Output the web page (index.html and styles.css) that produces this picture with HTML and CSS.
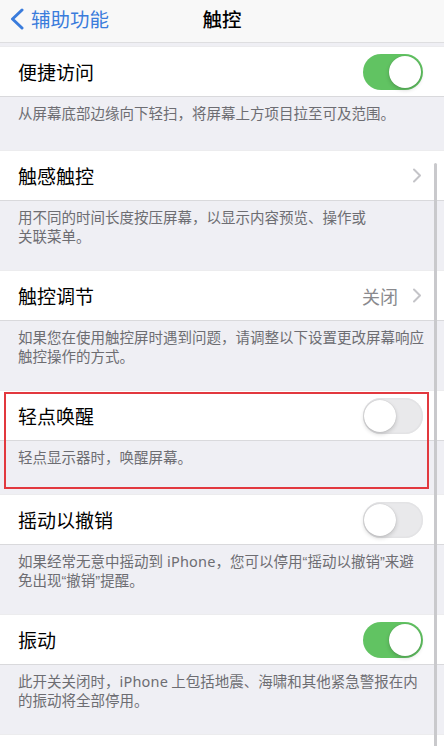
FILE: index.html
```html
<!DOCTYPE html>
<html lang="zh-CN">
<head>
<meta charset="utf-8">
<title>触控</title>
<link rel="stylesheet" href="styles.css">
</head>
<body>
<div class="screen">
  <header class="nav">
    <div class="back">
      <svg class="back-icon" width="16" height="22" viewBox="0 0 16 22"><path d="M13 2 L3.5 11 L13 20" fill="none" stroke="#3a7cdc" stroke-width="3" stroke-linecap="round" stroke-linejoin="round"/></svg>
      <span class="back-text">辅助功能</span>
    </div>
    <div class="nav-title">触控</div>
  </header>
  <div class="gap"></div>

  <div class="row">
    <span class="label">便捷访问</span>
    <span class="toggle on"><span class="knob"></span></span>
  </div>
  <div class="footer one">从屏幕底部边缘向下轻扫，将屏幕上方项目拉至可及范围。</div>

  <div class="row">
    <span class="label">触感触控</span>
    <span class="accessory"><svg class="chev" width="10" height="15" viewBox="0 0 10 15"><path d="M2 1.5 L8 7.5 L2 13.5" fill="none" stroke="#c4c4c8" stroke-width="2" stroke-linecap="round" stroke-linejoin="round"/></svg></span>
  </div>
  <div class="footer two">用不同的时间长度按压屏幕，以显示内容预览、操作或<br>关联菜单。</div>

  <div class="row">
    <span class="label">触控调节</span>
    <span class="accessory"><span class="value">关闭</span><svg class="chev" width="10" height="15" viewBox="0 0 10 15"><path d="M2 1.5 L8 7.5 L2 13.5" fill="none" stroke="#c4c4c8" stroke-width="2" stroke-linecap="round" stroke-linejoin="round"/></svg></span>
  </div>
  <div class="footer two">如果您在使用触控屏时遇到问题，请调整以下设置更改屏幕响应<br>触控操作的方式。</div>

  <div class="highlight-group">
    <div class="row">
      <span class="label">轻点唤醒</span>
      <span class="toggle off"><span class="knob"></span></span>
    </div>
    <div class="footer one">轻点显示器时，唤醒屏幕。</div>
    <div class="highlight"></div>
  </div>

  <div class="row">
    <span class="label">摇动以撤销</span>
    <span class="toggle off"><span class="knob"></span></span>
  </div>
  <div class="footer two">如果经常无意中摇动到<span class="latin"> iPhone</span>，您可以停用<span class="q">“</span>摇动以撤销<span class="q">”</span>来避<br>免出现<span class="q">“</span>撤销<span class="q">”</span>提醒。</div>

  <div class="row">
    <span class="label">振动</span>
    <span class="toggle on"><span class="knob"></span></span>
  </div>
  <div class="footer two">此开关关闭时，<span class="latin">iPhone</span> 上包括地震、海啸和其他紧急警报在内<br>的振动将全部停用。</div>

  <div class="row"></div>

  <div class="scrollbar"></div>
</div>
</body>
</html>
```
FILE: styles.css
```css
* { box-sizing: border-box; }
html, body {
  margin: 0;
  padding: 0;
  background: #efeff4;
}
.screen {
  position: relative;
  width: 444px;
  height: 746px;
  overflow: hidden;
  background: #efeff4;
  font-family: "Noto Sans CJK SC", "Noto Sans", "Liberation Sans", sans-serif;
}
.nav {
  position: relative;
  height: 43px;
  background: #f8f8f8;
  border-bottom: 1px solid #dedee0;
  display: flex;
  align-items: flex-start;
}
.back {
  display: flex;
  align-items: center;
  padding: 8px 0 0 9px;
  gap: 6px;
}
.back-icon { display: block; }
.back-text {
  color: #3a7cdc;
  font-size: 19.5px;
  line-height: 22px;
}
.nav-title {
  position: absolute;
  left: 0;
  right: 0;
  top: 7px;
  text-align: center;
  font-size: 19.5px;
  line-height: 24px;
  font-weight: 500;
  color: #000;
}
.gap { height: 3px; }
.row {
  height: 51px;
  flex: none;
  background: #fff;
  border-top: 1px solid #ececee;
  border-bottom: 1px solid #d9d9dc;
  display: flex;
  align-items: center;
  justify-content: space-between;
  padding: 0 21px 0 18px;
}
.label {
  font-size: 19px;
  color: #000;
  line-height: 24px;
}
.accessory {
  display: flex;
  align-items: center;
  gap: 14px;
  margin-right: 1px;
}
.value {
  font-size: 18px;
  color: #8a8a8e;
}
.chev { display: block; }
.footer {
  padding: 6px 18px 0 18px;
  font-size: 14.5px;
  line-height: 19px;
  color: #6d6d72;
  white-space: nowrap;
  overflow: hidden;
}
.footer.one { height: 53px; }
.footer.two { height: 69px; }
.latin {
  font-family: "Noto Sans", "Liberation Sans", sans-serif;
  letter-spacing: 0.2px;
  line-height: 1;
}
.q {
  font-family: "Liberation Sans", "Noto Sans", sans-serif;
  line-height: 1;
}
.toggle {
  position: relative;
  width: 60px;
  height: 36px;
  border-radius: 18px;
  flex: none;
}
.toggle.on { background: #61c362; }
.toggle.off {
  background: #e9e9eb;
  box-shadow: inset 0 0 0 1.5px #e3e3e5;
}
.knob {
  position: absolute;
  top: 2px;
  width: 32px;
  height: 32px;
  border-radius: 50%;
  background: #fff;
  box-shadow: 0 2px 4px rgba(0,0,0,0.18), 0 0 1px rgba(0,0,0,0.2);
}
.toggle.on .knob { right: 2px; }
.toggle.off .knob { left: 1px; }
.highlight-group { position: relative; }
.highlight {
  position: absolute;
  left: 4px;
  right: 15px;
  top: 2px;
  bottom: 5px;
  border: 2.5px solid #e2383e;
  pointer-events: none;
}
.scrollbar {
  position: absolute;
  left: 434px;
  top: 163px;
  width: 3px;
  height: 600px;
  border-radius: 2px;
  background: #c9c9cc;
}
```
